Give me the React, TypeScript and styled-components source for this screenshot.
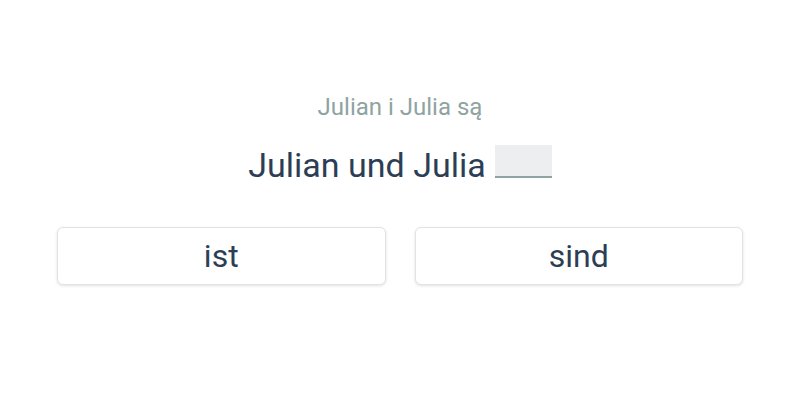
import React from "react";
import styled, { createGlobalStyle } from "styled-components";

const Global = createGlobalStyle`
  html, body { margin: 0; padding: 0; background: #ffffff; }
  body { font-family: Roboto, "Noto Sans", sans-serif; }
`;

const Page = styled.div`
  width: 800px;
  height: 400px;
  box-sizing: border-box;
  padding-top: 93px;
  display: flex;
  flex-direction: column;
  align-items: center;
`;

const Hint = styled.div`
  font-size: 24px;
  line-height: 28px;
  color: #8fa3a3;
`;

const Sentence = styled.div`
  margin-top: 24px;
  font-size: 34px;
  line-height: 40px;
  color: #2c3e55;
  display: flex;
  align-items: flex-start;
  gap: 9px;
`;

const Blank = styled.span`
  display: inline-block;
  width: 57px;
  height: 33px;
  background: #eceef0;
  border-bottom: 2px solid #8fa3a3;
  box-sizing: border-box;
`;

const Options = styled.div`
  margin-top: 42px;
  width: 686px;
  display: grid;
  grid-template-columns: 1fr 1fr;
  gap: 29px;
`;

const Option = styled.button`
  height: 58px;
  background: #ffffff;
  border: 1px solid #e3e3e3;
  border-radius: 6px;
  box-shadow: 0 1px 3px rgba(0, 0, 0, 0.12);
  font-family: Roboto, "Noto Sans", sans-serif;
  font-size: 32px;
  color: #2c3e55;
  cursor: pointer;
  padding: 0;
`;

export default function App() {
  return (
    <>
      <Global />
      <Page>
        <Hint>Julian i Julia są</Hint>
        <Sentence>
          <span>Julian und Julia</span>
          <Blank />
        </Sentence>
        <Options>
          <Option>ist</Option>
          <Option>sind</Option>
        </Options>
      </Page>
    </>
  );
}
